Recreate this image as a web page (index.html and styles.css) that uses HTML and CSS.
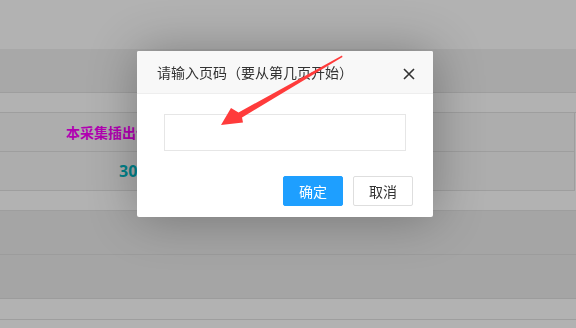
FILE: index.html
```html
<!DOCTYPE html>
<html lang="zh-CN">
<head>
<meta charset="utf-8">
<title>请输入页码</title>
<link rel="stylesheet" href="styles.css">
</head>
<body>
<div class="page">
  <div class="topbar"></div>
  <div class="tabbar"></div>
  <div class="spacer"></div>
  <div class="table">
    <div class="row"><span class="cell cell-magenta">本采集插出件数统计</span></div>
    <div class="row"><span class="cell cell-teal">300</span></div>
  </div>
  <div class="spacer"></div>
  <div class="band"></div>
  <div class="band"></div>
  <div class="spacer spacer-line"></div>
  <div class="rest"></div>
</div>

<div class="shade"></div>

<div class="layer">
  <div class="layer-title">请输入页码（要从第几页开始）</div>
  <span class="layer-close" aria-label="关闭">
    <svg width="12" height="12" viewBox="0 0 12 12"><path d="M1 1 L11 11 M11 1 L1 11" stroke="#333" stroke-width="1.6" fill="none"/></svg>
  </span>
  <div class="layer-content">
    <input class="layer-input" type="text">
  </div>
  <div class="layer-btns">
    <a class="btn btn-primary">确定</a>
    <a class="btn btn-default">取消</a>
  </div>
</div>

<svg class="arrow" width="576" height="328" viewBox="0 0 576 328">
  <polygon points="221,125 231,108 238.5,112.5 342,55.5 342.5,57 242,117.5 243,122.5" fill="#ff3b3b"/>
</svg>
</body>
</html>
```

FILE: styles.css
```css
html, body {
  margin: 0;
  padding: 0;
}
body {
  width: 576px;
  height: 328px;
  overflow: hidden;
  font-family: "Noto Sans CJK SC", "Noto Sans", sans-serif;
  background: #fff;
}
.page {
  display: flex;
  flex-direction: column;
}
.topbar {
  height: 49px;
  background: #fff;
}
.tabbar {
  height: 43px;
  background: #f1f1f1;
  border-bottom: 1px solid #e2e2e2;
}
.spacer {
  height: 19px;
  background: #fff;
  border-bottom: 1px solid #e2e2e2;
}
.spacer-line {
  height: 20px;
}
.table {
  width: 574px;
  border-right: 1px solid #e2e2e2;
}
.row {
  height: 38px;
  background: #f8f8f8;
  border-bottom: 1px solid #e2e2e2;
  display: flex;
  align-items: center;
}
.cell {
  font-weight: bold;
  white-space: nowrap;
}
.cell-magenta {
  padding-left: 66px;
  font-size: 14px;
  color: #ff00ff;
}
.cell-teal {
  padding-left: 119px;
  font-size: 16px;
  color: #00bac6;
  font-family: "Open Sans", "Noto Sans", sans-serif;
}
.band {
  height: 43px;
  background: #ececec;
  border-bottom: 1px solid #e0e0e0;
}
.rest {
  height: 20px;
  background: #fff;
}

.shade {
  position: fixed;
  inset: 0;
  background: rgba(0, 0, 0, 0.3);
}

.layer {
  position: absolute;
  left: 137px;
  top: 51px;
  width: 296px;
  background: #fff;
  border-radius: 2px;
  box-shadow: 1px 1px 50px rgba(0, 0, 0, 0.3);
}
.layer-title {
  height: 42px;
  line-height: 42px;
  padding: 0 80px 0 20px;
  background: #f8f8f8;
  border-bottom: 1px solid #eee;
  border-radius: 2px 2px 0 0;
  font-size: 14px;
  color: #333;
  white-space: nowrap;
}
.layer-close {
  position: absolute;
  right: 18px;
  top: 17px;
  width: 12px;
  height: 12px;
  display: block;
}
.layer-close svg {
  display: block;
}
.layer-content {
  padding: 20px 27px 20px 27px;
}
.layer-input {
  display: block;
  box-sizing: border-box;
  width: 242px;
  height: 37px;
  margin: 0;
  border: 1px solid #e6e6e6;
  border-radius: 0;
  outline: none;
  background: #fff;
}
.layer-btns {
  display: flex;
  justify-content: flex-end;
  gap: 10px;
  padding: 5px 20px 11px 15px;
}
.btn {
  box-sizing: border-box;
  height: 30px;
  line-height: 28px;
  padding: 0 15px;
  border: 1px solid;
  border-radius: 2px;
  font-size: 14px;
  cursor: pointer;
}
.btn-primary {
  background: #1e9fff;
  border-color: #1e9fff;
  color: #fff;
}
.btn-default {
  background: #fff;
  border-color: #dedede;
  color: #333;
}

.arrow {
  position: absolute;
  left: 0;
  top: 0;
  pointer-events: none;
}
```
